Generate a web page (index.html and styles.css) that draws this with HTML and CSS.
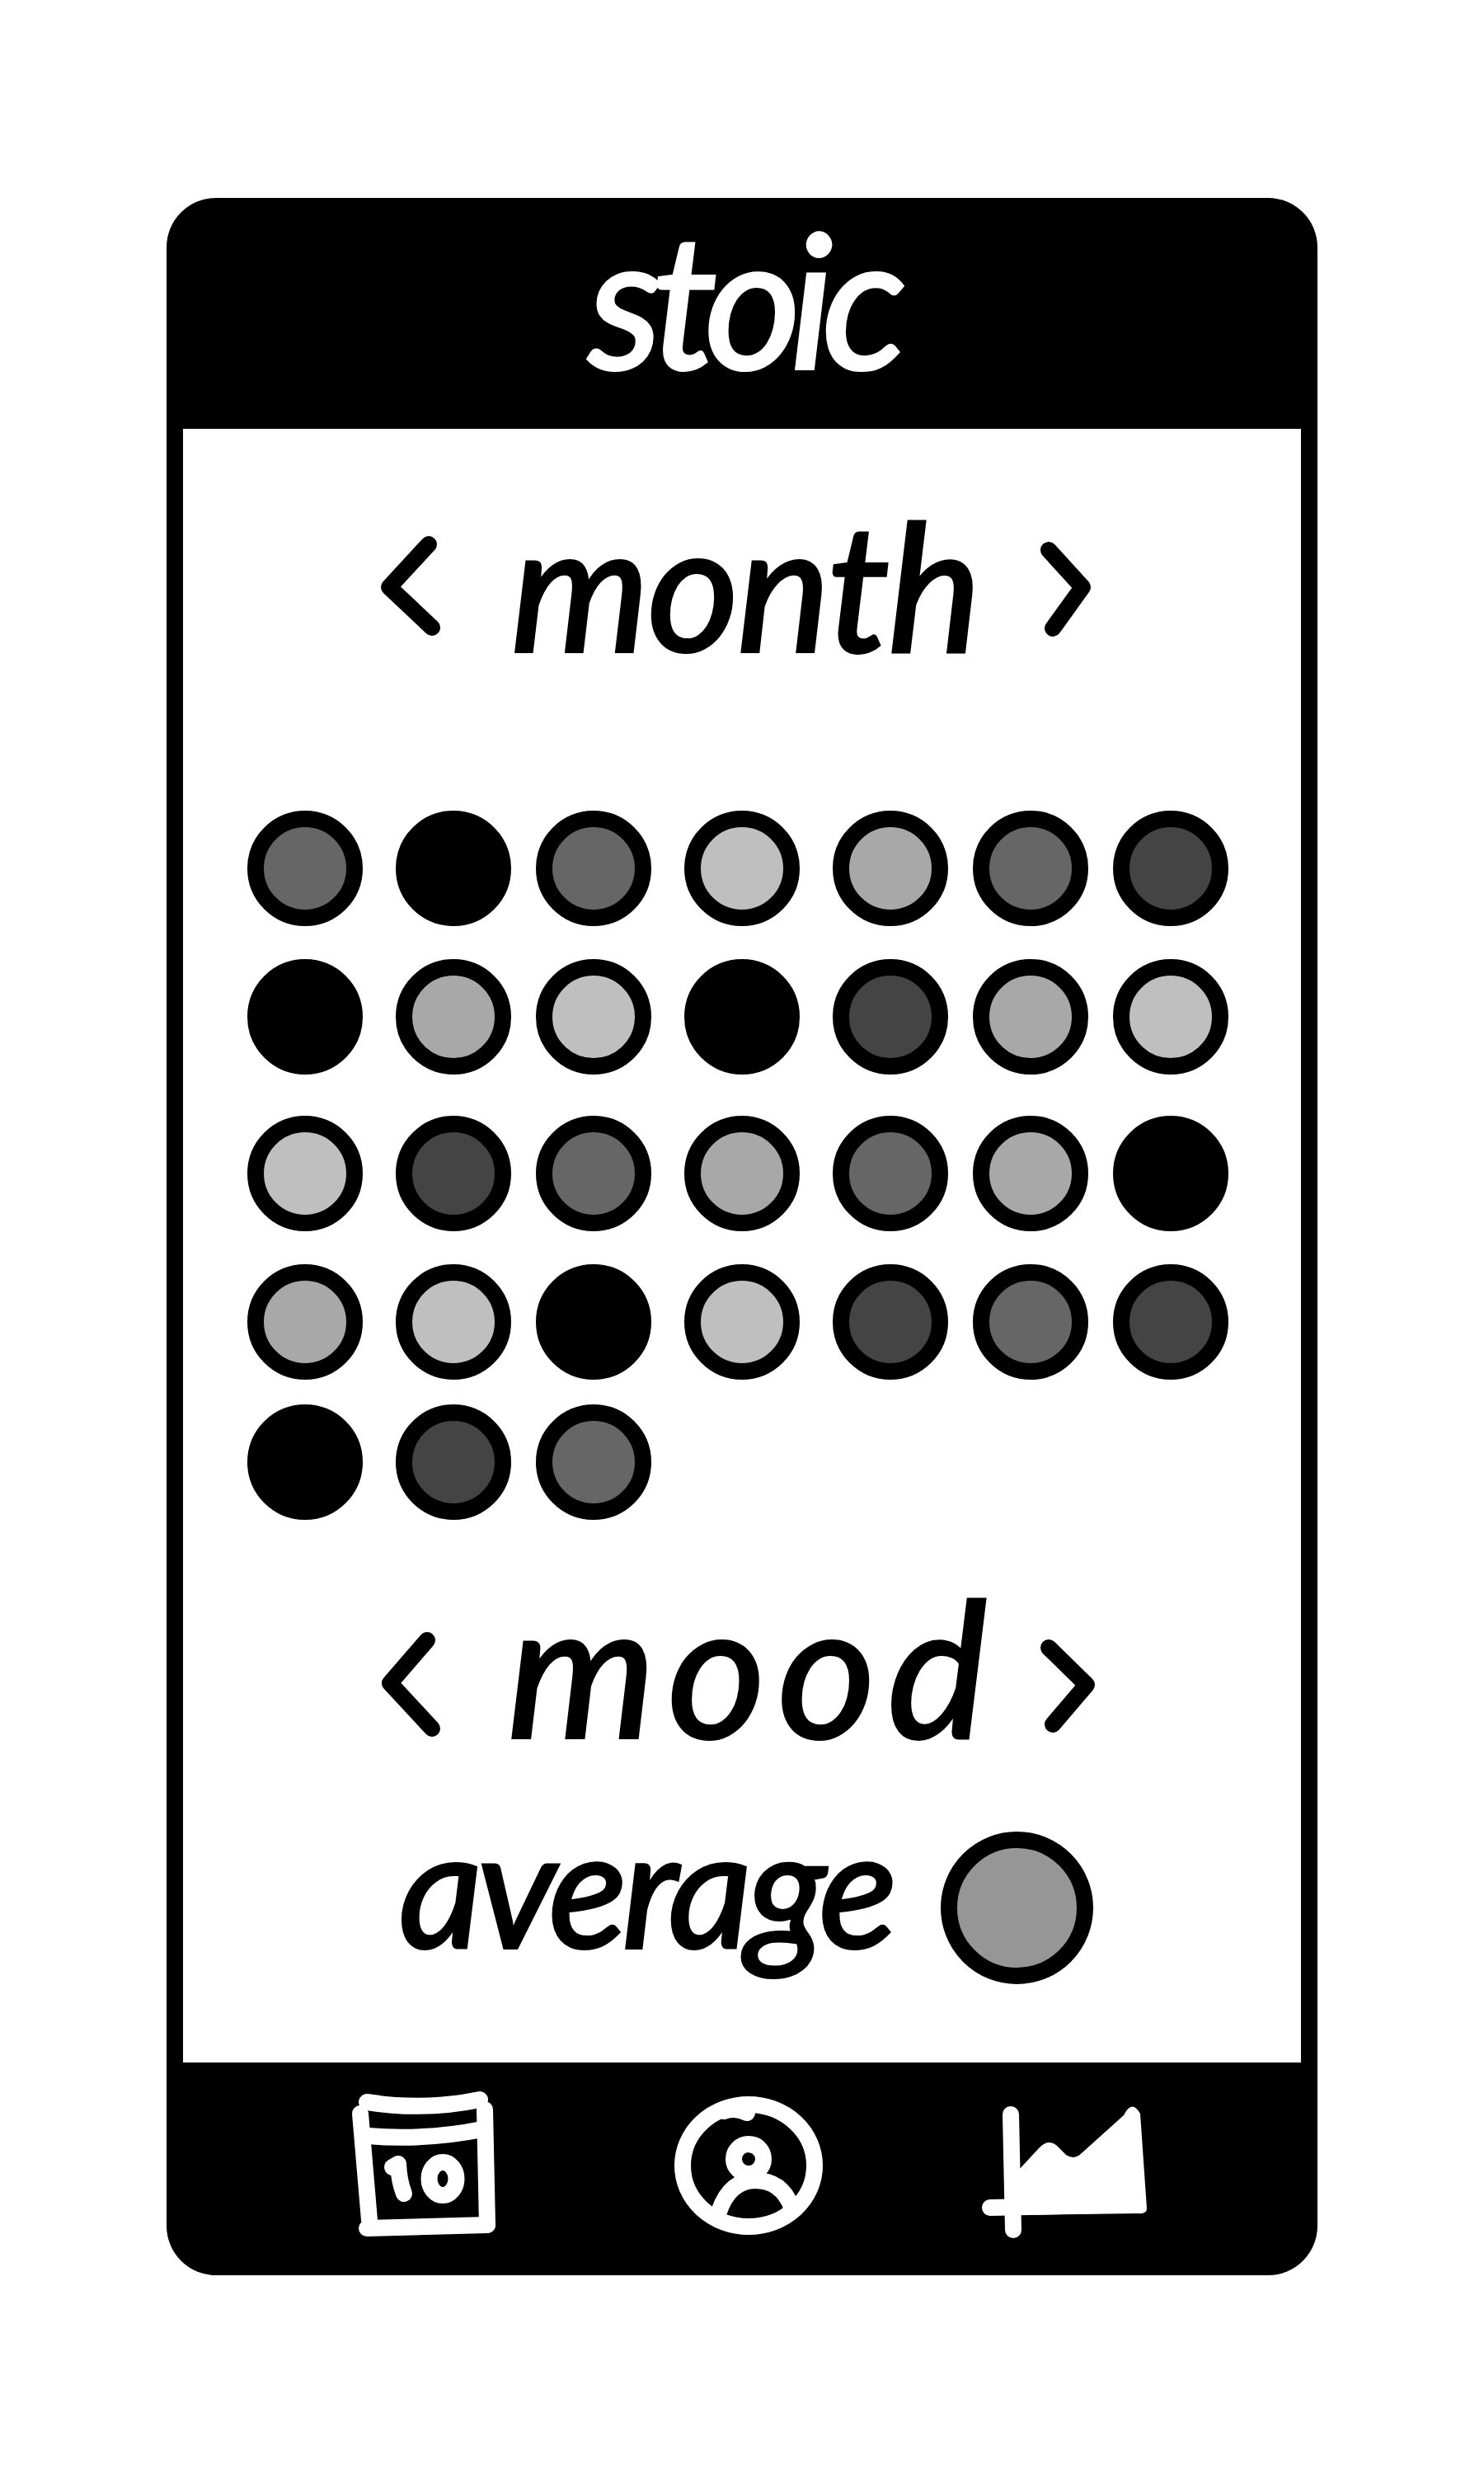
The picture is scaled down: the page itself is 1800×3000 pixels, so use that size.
FILE: index.html
```html
<!DOCTYPE html>
<html lang="en">
<head>
  <meta charset="UTF-8" />
  <title>stoic</title>
  <link rel="stylesheet" href="styles.css">
</head>
<body>
  <svg class="sprites">
    <symbol id="dot" viewBox="0 0 140 140"><circle cx="70" cy="70" r="60" /></symbol>
  </svg>

  <div class="phone">
    <header class="app-header">
      <h1 class="app-title">stoic</h1>
    </header>

    <main class="app-main">
      <div class="nav-row month-nav">
        <svg class="chevron" viewBox="0 0 80 130"><path d="M60 13 L12 65 L64 114" /></svg>
        <h2 class="nav-title month-title">month</h2>
        <svg class="chevron" viewBox="0 0 80 130"><path d="M22 20 L63 65 L27 115" /></svg>
      </div>

      <div class="dot-grid">
        <svg class="dot level-3"><use href="#dot" /></svg><svg class="dot"><use href="#dot" /></svg><svg class="dot level-3"><use href="#dot" /></svg><svg class="dot level-1"><use href="#dot" /></svg><svg class="dot level-2"><use href="#dot" /></svg><svg class="dot level-3"><use href="#dot" /></svg><svg class="dot level-4"><use href="#dot" /></svg>
        <svg class="dot"><use href="#dot" /></svg><svg class="dot level-2"><use href="#dot" /></svg><svg class="dot level-1"><use href="#dot" /></svg><svg class="dot"><use href="#dot" /></svg><svg class="dot level-4"><use href="#dot" /></svg><svg class="dot level-2"><use href="#dot" /></svg><svg class="dot level-1"><use href="#dot" /></svg>
        <svg class="dot level-1"><use href="#dot" /></svg><svg class="dot level-4"><use href="#dot" /></svg><svg class="dot level-3"><use href="#dot" /></svg><svg class="dot level-2"><use href="#dot" /></svg><svg class="dot level-3"><use href="#dot" /></svg><svg class="dot level-2"><use href="#dot" /></svg><svg class="dot"><use href="#dot" /></svg>
        <svg class="dot level-2"><use href="#dot" /></svg><svg class="dot level-1"><use href="#dot" /></svg><svg class="dot"><use href="#dot" /></svg><svg class="dot level-1"><use href="#dot" /></svg><svg class="dot level-4"><use href="#dot" /></svg><svg class="dot level-3"><use href="#dot" /></svg><svg class="dot level-4"><use href="#dot" /></svg>
        <svg class="dot"><use href="#dot" /></svg><svg class="dot level-4"><use href="#dot" /></svg><svg class="dot level-3"><use href="#dot" /></svg>
      </div>

      <div class="nav-row mood-nav">
        <svg class="chevron" viewBox="0 0 80 130"><path d="M58 13 L13 65 L64 120" /></svg>
        <h2 class="nav-title mood-title">mood</h2>
        <svg class="chevron" viewBox="0 0 80 130"><path d="M22 22 L68 67 L27 115" /></svg>
      </div>

      <div class="average-row">
        <span class="average-label">average</span>
        <svg class="average-dot" viewBox="0 0 185 185"><circle cx="92.5" cy="92.5" r="82.5" /></svg>
      </div>
    </main>

    <footer class="tab-bar">
      <svg class="tab-icon" viewBox="0 0 215 210">
        <path d="M35 29 Q105 40 172 26" />
        <path d="M27 43 L38 172" />
        <path d="M178 38 L181 178" />
        <path d="M35 182 L181 178" />
        <path d="M36 70 Q105 76 175 62" />
        <path d="M66 108 L73 104 Q74 125 80 140" />
        <ellipse cx="127" cy="122" rx="16.5" ry="20" />
      </svg>
      <svg class="tab-icon" viewBox="0 0 215 210">
        <ellipse cx="108" cy="106" rx="80" ry="74" />
        <path d="M78 40 Q92 35 106 42" />
        <ellipse cx="108" cy="98" rx="18" ry="18" />
        <path d="M112 81 Q118 81 122 87" />
        <path d="M72 162 Q85 124 116 124 Q148 124 160 156" />
      </svg>
      <svg class="tab-icon" viewBox="0 0 215 210">
        <path class="chart-fill" d="M55 112 L80 85 Q93 71 105 85 L113 93 Q123 100 133 90 L183 45 Q193 25 203 43 L211 158 Q211 165 200 164 L58 166 Z" />
        <path d="M46 44 L49 184" />
        <path d="M21 157 L200 153" />
      </svg>
    </footer>
  </div>
</body>
</html>
```

FILE: styles.css
```css
* {
  box-sizing: border-box;
  margin: 0;
  padding: 0;
}

body {
  background: white;
  font-family: "Lato", "Liberation Sans", sans-serif;
}

.sprites {
  display: none;
}

.phone {
  width: 1396px;
  height: 2519px;
  margin: 240px auto 0;
  padding: 20px;
  background: black;
  clip-path: inset(0 round 60px);
  display: flex;
  flex-direction: column;
}

/* header */
.app-header {
  height: 260px;
  background: black;
  display: flex;
  justify-content: center;
  align-items: center;
}

.app-title {
  padding-bottom: 60px;
  font-size: 225px;
  font-style: italic;
  font-weight: normal;
  line-height: 160px;
  letter-spacing: -13px;
  color: white;
  -webkit-text-stroke: 4px white;
}

/* main */
.app-main {
  flex: 1;
  padding-top: 127px;
  background: white;
}

.nav-row {
  height: 130px;
  padding: 0 248px 0 238px;
  display: grid;
  grid-template-columns: 80px 1fr 80px;
  align-items: center;
}

.mood-nav {
  margin-top: 133px;
}

.nav-title {
  font-style: italic;
  font-weight: normal;
  text-align: center;
  color: black;
  -webkit-text-stroke: 4px black;
}

.month-title {
  padding: 0 0 8px 18px;
  font-size: 213px;
  line-height: 90px;
  letter-spacing: -2px;
}

.mood-title {
  padding: 0 0 44px 38px;
  font-size: 228px;
  line-height: 80px;
  letter-spacing: 15px;
}

.chevron {
  width: 80px;
  height: 130px;
  fill: none;
  stroke: black;
  stroke-width: 20;
  stroke-linecap: round;
  stroke-linejoin: round;
}

.dot-grid {
  margin: 206px 0 0 78px;
  display: grid;
  grid-template-columns: 180px 170px 180px 180px 170px 170px 140px;
  grid-template-rows: 180px 190px 180px 170px 140px;
}

.dot {
  width: 140px;
  height: 140px;
  fill: black;
  stroke: black;
  stroke-width: 20;
}

.level-1 { fill: #bfbfbf; }
.level-2 { fill: #a8a8a8; }
.level-3 { fill: #666666; }
.level-4 { fill: #444444; }

.average-row {
  margin-top: 115px;
  padding-left: 262px;
  display: flex;
  align-items: center;
  gap: 60px;
}

.average-label {
  width: 597px;
  padding-bottom: 56px;
  font-size: 198px;
  font-style: italic;
  line-height: 100px;
  letter-spacing: -6px;
  color: black;
  -webkit-text-stroke: 4px black;
}

.average-dot {
  width: 185px;
  height: 185px;
  fill: #969696;
  stroke: black;
  stroke-width: 20;
}

/* footer */
.tab-bar {
  height: 238px;
  padding: 19px 0 0 188px;
  background: black;
  display: grid;
  grid-template-columns: 390px 380px 215px;
  align-items: start;
}

.tab-icon {
  width: 215px;
  height: 210px;
  fill: none;
  stroke: white;
  stroke-width: 20;
  stroke-linecap: round;
  stroke-linejoin: round;
}

.chart-fill {
  fill: white;
  stroke: none;
}
```
